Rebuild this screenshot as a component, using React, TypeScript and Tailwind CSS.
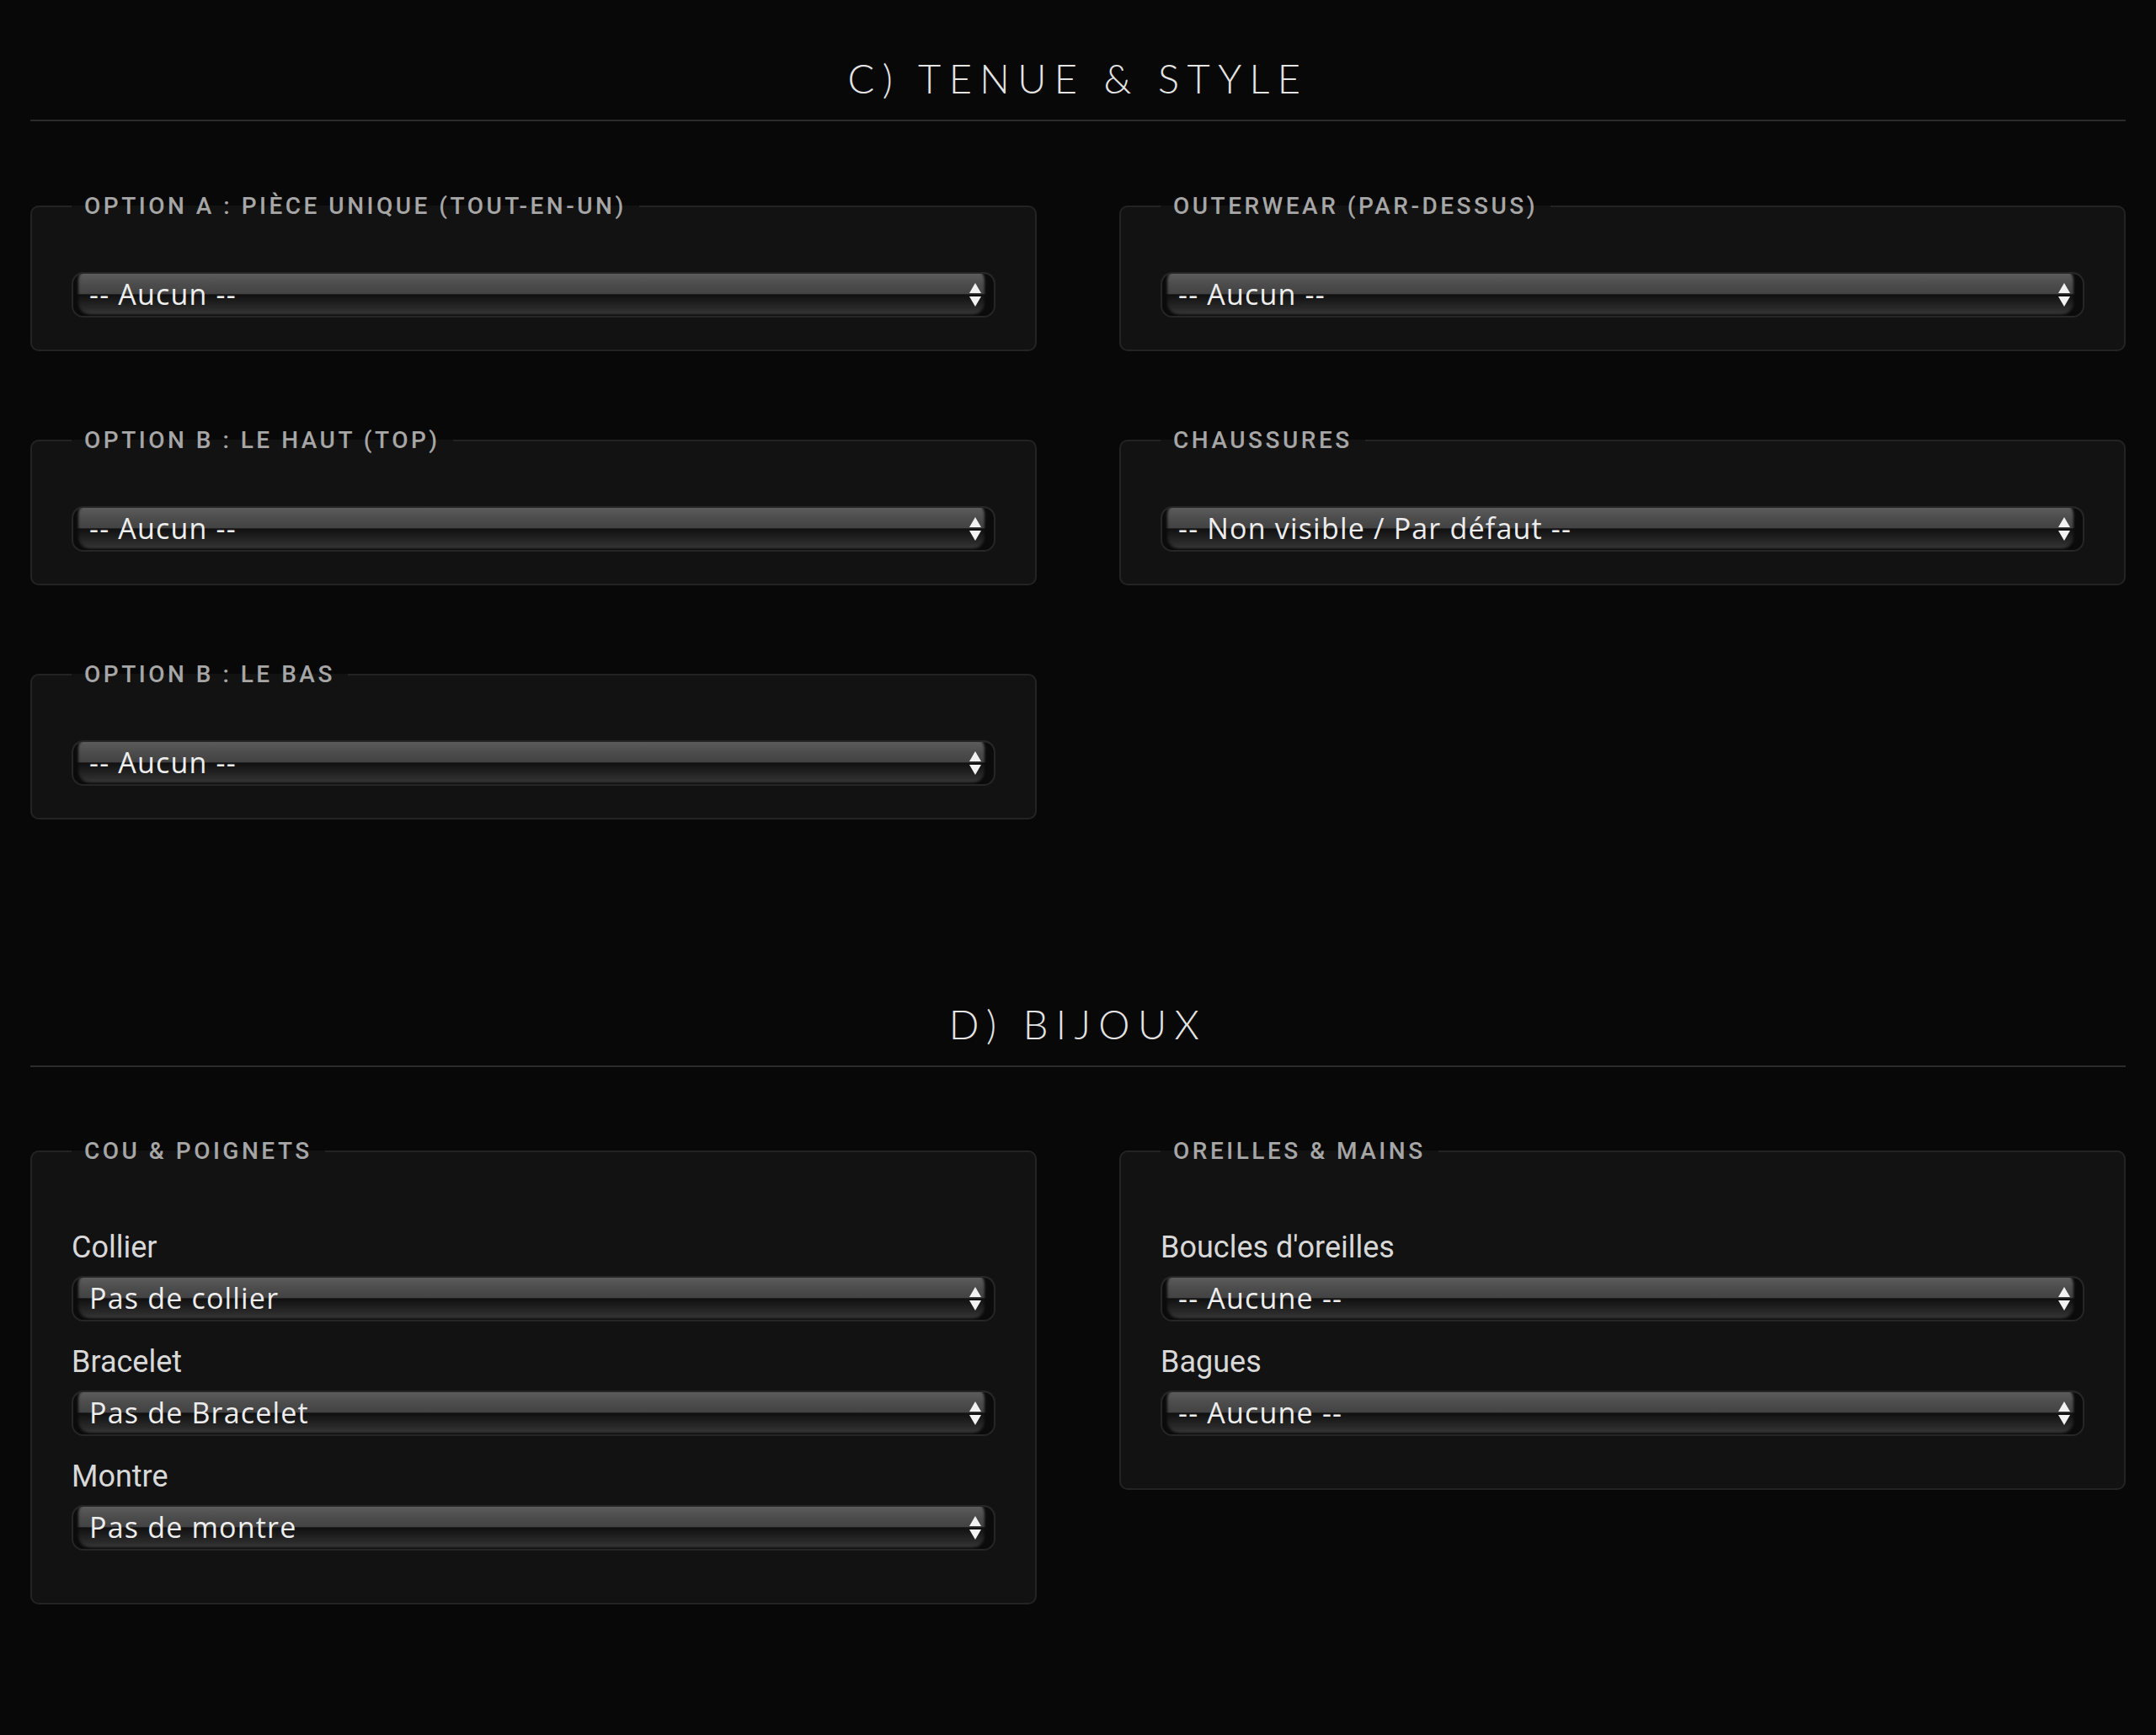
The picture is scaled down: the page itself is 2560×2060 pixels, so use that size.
import type { ReactNode } from 'react';

// Outfit + jewellery choices, laid out as in the editor panel
const OUTFIT = [
  { legend: 'Option A : Pièce unique (tout-en-un)', value: '-- Aucun --' },
  { legend: 'Outerwear (par-dessus)', value: '-- Aucun --' },
  { legend: 'Option B : Le haut (top)', value: '-- Aucun --' },
  { legend: 'Chaussures', value: '-- Non visible / Par défaut --' },
  { legend: 'Option B : Le bas', value: '-- Aucun --' },
];

const JEWELS = [
  {
    legend: 'Cou & poignets',
    fields: [
      { label: 'Collier', value: 'Pas de collier' },
      { label: 'Bracelet', value: 'Pas de Bracelet' },
      { label: 'Montre', value: 'Pas de montre' },
    ],
  },
  {
    legend: 'Oreilles & mains',
    fields: [
      { label: "Boucles d'oreilles", value: '-- Aucune --' },
      { label: 'Bagues', value: '-- Aucune --' },
    ],
  },
];

function SectionTitle({ children }: { children: ReactNode }) {
  return (
    <div className="border-b-2 border-[#2b2b2b] pb-[25px]">
      <h2 className="text-center font-['Lato',sans-serif] text-[47px] font-light leading-none tracking-[0.2em] text-[#e4e4e4]">
        {children}
      </h2>
    </div>
  );
}

function Arrows() {
  return (
    <svg
      width="16"
      height="30"
      viewBox="0 0 16 30"
      className="pointer-events-none absolute right-[14px] top-1/2 -translate-y-1/2"
    >
      <path d="M8 1 L15 13 L1 13 Z" fill="#f2f2f2" />
      <path d="M1 17 L15 17 L8 29 Z" fill="#f2f2f2" />
    </svg>
  );
}

function GlossySelect({ value }: { value: string }) {
  return (
    <div className="relative h-[54px] rounded-[14px] border-2 border-[#262626] bg-[#121212]">
      <select
        defaultValue={value}
        className="h-full w-full appearance-none rounded-[12px] bg-[linear-gradient(to_bottom,#5c5c5c_0%,#4c4c4c_25%,#434343_47%,#101010_50%,#1a1a1a_62%,#2b2b2b_85%,#3b3b3b_100%)] pb-[2px] pl-[19px] font-['Open_Sans',sans-serif] text-[34px] leading-none tracking-[0.035em] text-[#ededed] shadow-[inset_9px_-4px_3px_-3px_#0b0b0b,inset_-14px_-4px_3px_-3px_#0b0b0b] outline-none"
      >
        <option value={value}>{value}</option>
      </select>
      <Arrows />
    </div>
  );
}

function Box({
  legend,
  className,
  children,
}: {
  legend: string;
  className: string;
  children: ReactNode;
}) {
  return (
    <fieldset
      className={`rounded-[10px] border-2 border-[#232323] bg-[#121212] px-[47px] ${className}`}
    >
      <legend className="px-[15px] font-['Roboto',sans-serif] text-[28px] font-medium uppercase leading-[34px] tracking-[0.125em] text-[#a6a6a6]">
        {legend}
      </legend>
      {children}
    </fieldset>
  );
}

export default function App() {
  return (
    <div className="min-h-[2060px] bg-[#080808] px-[36px] pt-[70px]">
      {/* C) Tenue & style */}
      <SectionTitle>C) TENUE &amp; STYLE</SectionTitle>
      <div className="mt-[84px] grid grid-cols-2 gap-x-[98px] gap-y-[89px]">
        {OUTFIT.map((item) => (
          <Box key={item.legend} legend={item.legend} className="pt-[61px] pb-[38px]">
            <GlossySelect value={item.value} />
          </Box>
        ))}
      </div>

      {/* D) Bijoux */}
      <div className="mt-[220px]">
        <SectionTitle>D) BIJOUX</SectionTitle>
      </div>
      <div className="mt-[83px] grid grid-cols-2 items-start gap-x-[98px]">
        {JEWELS.map((group) => (
          <Box key={group.legend} legend={group.legend} className="pt-[77px] pb-[62px]">
            <div className="flex flex-col gap-[28px]">
              {group.fields.map((f) => (
                <div key={f.label}>
                  <label className="mb-[14px] block font-['Roboto',sans-serif] text-[36px] leading-[40px] text-[#d8d8d8]">
                    {f.label}
                  </label>
                  <GlossySelect value={f.value} />
                </div>
              ))}
            </div>
          </Box>
        ))}
      </div>
    </div>
  );
}
